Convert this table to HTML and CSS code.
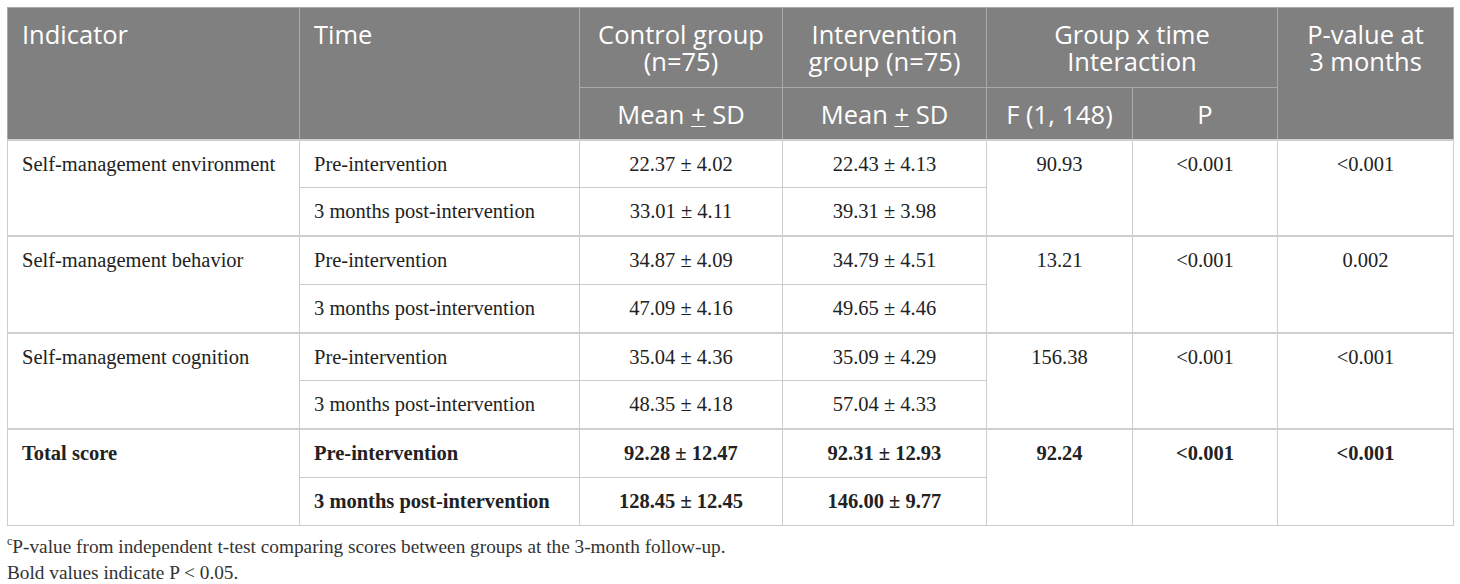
FILE: index.html
```html
<!DOCTYPE html>
<html lang="en">
<head>
<meta charset="utf-8">
<title>Table</title>
<link rel="stylesheet" href="styles.css">
</head>
<body>
<div class="wrap">
<table class="data">
  <colgroup>
    <col class="c1"><col class="c2"><col class="c3"><col class="c4"><col class="c5"><col class="c6"><col class="c7">
  </colgroup>
  <thead>
    <tr class="h1">
      <th rowspan="2" class="left">Indicator</th>
      <th rowspan="2" class="left">Time</th>
      <th><span class="ln">Control group</span><span class="ln">(n=75)</span></th>
      <th><span class="ln">Intervention</span><span class="ln">group (n=75)</span></th>
      <th colspan="2"><span class="ln">Group x time</span><span class="ln">Interaction</span></th>
      <th rowspan="2"><span class="ln">P-value at</span><span class="ln">3 months</span></th>
    </tr>
    <tr class="h2">
      <th>Mean <u>+</u> SD</th>
      <th>Mean <u>+</u> SD</th>
      <th>F (1, 148)</th>
      <th>P</th>
    </tr>
  </thead>
  <tbody>
    <tr class="grp">
      <td rowspan="2" class="left">Self-management environment</td>
      <td class="left">Pre-intervention</td>
      <td>22.37 ± 4.02</td>
      <td>22.43 ± 4.13</td>
      <td rowspan="2">90.93</td>
      <td rowspan="2">&lt;0.001</td>
      <td rowspan="2">&lt;0.001</td>
    </tr>
    <tr>
      <td class="left">3 months post-intervention</td>
      <td>33.01 ± 4.11</td>
      <td>39.31 ± 3.98</td>
    </tr>
    <tr class="grp">
      <td rowspan="2" class="left">Self-management behavior</td>
      <td class="left">Pre-intervention</td>
      <td>34.87 ± 4.09</td>
      <td>34.79 ± 4.51</td>
      <td rowspan="2">13.21</td>
      <td rowspan="2">&lt;0.001</td>
      <td rowspan="2">0.002</td>
    </tr>
    <tr>
      <td class="left">3 months post-intervention</td>
      <td>47.09 ± 4.16</td>
      <td>49.65 ± 4.46</td>
    </tr>
    <tr class="grp">
      <td rowspan="2" class="left">Self-management cognition</td>
      <td class="left">Pre-intervention</td>
      <td>35.04 ± 4.36</td>
      <td>35.09 ± 4.29</td>
      <td rowspan="2">156.38</td>
      <td rowspan="2">&lt;0.001</td>
      <td rowspan="2">&lt;0.001</td>
    </tr>
    <tr>
      <td class="left">3 months post-intervention</td>
      <td>48.35 ± 4.18</td>
      <td>57.04 ± 4.33</td>
    </tr>
    <tr class="grp bold">
      <td rowspan="2" class="left">Total score</td>
      <td class="left">Pre-intervention</td>
      <td>92.28 ± 12.47</td>
      <td>92.31 ± 12.93</td>
      <td rowspan="2">92.24</td>
      <td rowspan="2">&lt;0.001</td>
      <td rowspan="2">&lt;0.001</td>
    </tr>
    <tr class="bold">
      <td class="left">3 months post-intervention</td>
      <td>128.45 ± 12.45</td>
      <td>146.00 ± 9.77</td>
    </tr>
  </tbody>
</table>
<div class="notes">
  <p><sup>c</sup>P-value from independent t-test comparing scores between groups at the 3-month follow-up.</p>
  <p>Bold values indicate P &lt; 0.05.</p>
</div>
</div>
</body>
</html>
```

FILE: styles.css
```css
html, body {
  margin: 0;
  padding: 0;
  background: #ffffff;
}

.wrap {
  padding: 7px 7px 0 7px;
}

.data {
  width: 1446px;
  table-layout: fixed;
  border-collapse: collapse;
  border: 1px solid #c6c6c6;
}

.c1 { width: 292px; }
.c2 { width: 280px; }
.c3 { width: 203px; }
.c4 { width: 204px; }
.c5 { width: 146px; }
.c6 { width: 145px; }
.c7 { width: 176px; }

.data th {
  background: #7f807f;
  color: #ffffff;
  font-family: "Open Sans", "Liberation Sans", sans-serif;
  font-weight: 400;
  font-size: 25.5px;
  line-height: 27px;
  text-align: center;
  border: 1px solid #a9a9a9;
  padding: 0 8px;
  white-space: nowrap;
}

.data th .ln {
  display: block;
  height: 27px;
}

.data .h1 th {
  height: 80px;
  vertical-align: top;
  padding-top: 13px;
  box-sizing: border-box;
}

.data .h2 th {
  height: 52px;
  vertical-align: middle;
  padding-top: 2px;
  box-sizing: border-box;
}

.data th.left {
  text-align: left;
  padding-left: 14px;
}

.data th u {
  text-decoration: underline;
  text-underline-offset: 2px;
  text-decoration-thickness: 1px;
}

.data td {
  font-family: "Liberation Serif", "Times New Roman", serif;
  font-size: 20.5px;
  color: #222222;
  text-align: center;
  vertical-align: top;
  height: 48.3px;
  box-sizing: border-box;
  padding: 11px 10px 0 10px;
  border: 1px solid #cccccc;
  line-height: 24px;
}

.data td.left {
  text-align: left;
  padding-left: 14px;
}

.data tr.grp td {
  border-top: 2px solid #cfcfcf;
}

.data tr.bold td {
  font-weight: 700;
}

.notes {
  font-family: "Liberation Serif", "Times New Roman", serif;
  font-size: 19.3px;
  color: #333333;
  padding-top: 9px;
}

.notes p {
  margin: 0 0 3px 0;
  line-height: 23px;
}

.notes sup {
  font-size: 12px;
  vertical-align: top;
  line-height: 12px;
}
```
